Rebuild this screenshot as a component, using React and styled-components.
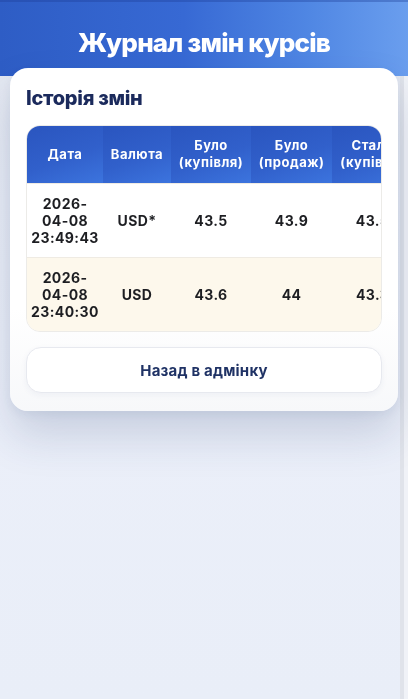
import React from "react";
import styled, { createGlobalStyle } from "styled-components";

const Global = createGlobalStyle`
  html, body { margin: 0; padding: 0; }
  body {
    background: #eaeef7;
    font-family: Inter, "Noto Sans", "Liberation Sans", sans-serif;
    -webkit-font-smoothing: antialiased;
  }
  * { box-sizing: border-box; }
`;

const Page = styled.div`
  min-height: 699px;
  background: linear-gradient(180deg, #e1e5ee 0px, #e8ecf6 200px, #ebeff9 400px, #e9eef8 699px);
  box-shadow: inset -4px 0 0 #f0f2f7, inset -8px 0 0 #e0e3ea;
`;

const Header = styled.header`
  height: 76px;
  padding-top: 8px;
  display: flex;
  align-items: center;
  justify-content: center;
  background: linear-gradient(90deg, #2e5dc5 0%, #3769d4 45%, #4f86e3 75%, #6a9eee 100%);
  box-shadow: inset 0 2px 0 rgba(30, 60, 150, 0.35);
`;

const PageTitle = styled.h1`
  margin: 0;
  color: #ffffff;
  font-size: 26px;
  font-weight: 800;
  letter-spacing: -0.8px;
`;

const Card = styled.section`
  margin: -8px 10px 0 10px;
  padding: 18px 16px 18px 16px;
  border-radius: 18px;
  background: linear-gradient(180deg, #ffffff 0%, #ffffff 70%, #f7f8fa 100%);
  box-shadow: 0 24px 44px rgba(40, 60, 110, 0.18), 0 4px 10px rgba(40, 60, 110, 0.06);
`;

const CardTitle = styled.h2`
  margin: 0 0 15px 0;
  color: #1b2a5c;
  font-size: 20px;
  line-height: 24px;
  font-weight: 800;
  letter-spacing: -0.3px;
`;

const TableWrap = styled.div`
  border-radius: 14px;
  border: 1px solid #ecebe8;
  overflow: hidden;
`;

const Scroller = styled.div`
  overflow-x: auto;
  scrollbar-width: none;
  &::-webkit-scrollbar { display: none; }
`;

const Table = styled.table`
  border-collapse: collapse;
  table-layout: fixed;
  width: 548px;
`;

const Th = styled.th`
  height: 57px;
  padding: 0 4px;
  color: #ffffff;
  font-size: 13px;
  line-height: 17px;
  font-weight: 700;
  letter-spacing: 0.5px;
  text-align: center;
  background: linear-gradient(160deg, #2a55bf 0%, #3160cb 55%, #3c74de 100%);
`;

const Row = styled.tr`
  background: ${(p) => (p.$alt ? "#fdf8ec" : "#ffffff")};
  border-top: 1px solid #efebe3;
`;

const Td = styled.td`
  height: 74px;
  padding: 0 4px;
  color: #1d1e22;
  font-size: 14px;
  line-height: 17px;
  font-weight: 700;
  letter-spacing: 0.4px;
  text-align: center;
`;

const DateLine = styled.span`
  display: block;
`;

const BackButton = styled.button`
  display: flex;
  align-items: center;
  justify-content: center;
  width: 100%;
  height: 46px;
  margin-top: 15px;
  border: 1px solid #e7e9ef;
  border-radius: 15px;
  background: #ffffff;
  color: #1f3265;
  font-family: inherit;
  font-size: 15px;
  font-weight: 700;
  letter-spacing: 0.2px;
  box-shadow: 0 2px 6px rgba(40, 60, 110, 0.05);
`;

const cols = [76, 68, 80, 81, 81, 81, 81];
const heads = [
  "Дата",
  "Валюта",
  "Було (купівля)",
  "Було (продаж)",
  "Стало (купівля)",
  "Стало (продаж)",
  "Адмін",
];

const rows = [
  { date: ["2026-", "04-08", "23:49:43"], cur: "USD*", b1: "43.5", b2: "43.9", s1: "43.5", s2: "44", who: "admin" },
  { date: ["2026-", "04-08", "23:40:30"], cur: "USD", b1: "43.6", b2: "44", s1: "43.3", s2: "43.9", who: "admin" },
];

export default function App() {
  return (
    <>
      <Global />
      <Page>
        <Header>
          <PageTitle>Журнал змін курсів</PageTitle>
        </Header>
        <Card>
          <CardTitle>Історія змін</CardTitle>
          <TableWrap>
            <Scroller>
              <Table>
                <colgroup>
                  {cols.map((w, i) => (
                    <col key={i} style={{ width: w }} />
                  ))}
                </colgroup>
                <thead>
                  <tr>
                    {heads.map((h) => (
                      <Th key={h}>{h}</Th>
                    ))}
                  </tr>
                </thead>
                <tbody>
                  {rows.map((r, i) => (
                    <Row key={i} $alt={i % 2 === 1}>
                      <Td>
                        {r.date.map((d) => (
                          <DateLine key={d}>{d}</DateLine>
                        ))}
                      </Td>
                      <Td>{r.cur}</Td>
                      <Td>{r.b1}</Td>
                      <Td>{r.b2}</Td>
                      <Td>{r.s1}</Td>
                      <Td>{r.s2}</Td>
                      <Td>{r.who}</Td>
                    </Row>
                  ))}
                </tbody>
              </Table>
            </Scroller>
          </TableWrap>
          <BackButton>Назад в адмінку</BackButton>
        </Card>
      </Page>
    </>
  );
}
